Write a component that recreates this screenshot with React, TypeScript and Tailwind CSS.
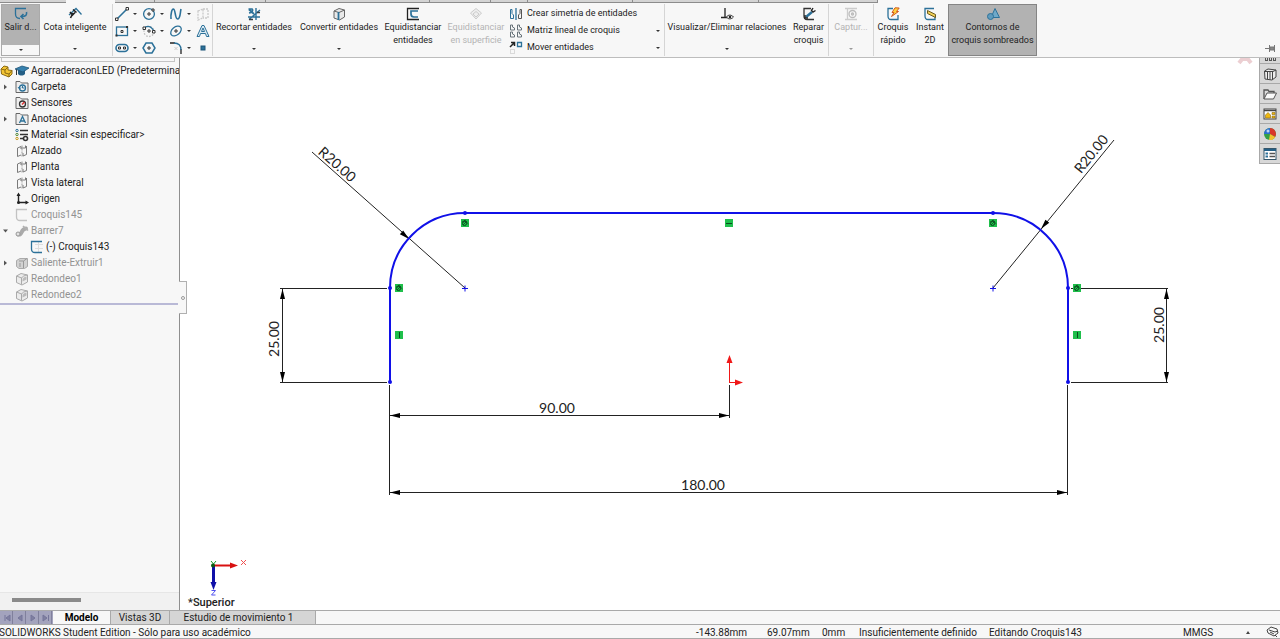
import type { ReactNode } from 'react'

const BLUE = '#2c7199'
const DARK = '#3a3f44'

function Icon({ children, size = 14 }: { children: ReactNode; size?: number }) {
  return (
    <svg width={size} height={size} viewBox="0 0 14 14" fill="none" stroke={BLUE} strokeWidth="1.3" className="shrink-0" aria-hidden="true">
      {children}
    </svg>
  )
}

function Caret({ light }: { light?: boolean }) {
  return (
    <svg width="4" height="2" viewBox="0 0 4 2" className="shrink-0" aria-hidden="true">
      <path d="M0 0H4L2 2Z" fill={light ? '#999' : '#333'} />
    </svg>
  )
}

const icons = {
  exit: (
    <Icon>
      <path d="M12 1.5H1.500V7C1.500 10 3 11.500 6 11.500" />
      <path d="M12.500 5C13 8 12 9.500 7.500 9.500M9.500 7L7 9.500L9.500 12" strokeWidth="1.600" />
    </Icon>
  ),
  dimension: (
    <Icon>
      <path d="M1 8L8 1.500L13.500 7.500" />
      <path d="M2.500 11L5 6M2 5L4.500 8L7 5.500M5 2.500L8.500 5.500" stroke="#222" strokeWidth="1.600" />
    </Icon>
  ),
  line: (
    <Icon>
      <path d="M2 12L12 2" strokeWidth="1.600" />
      <path d="M.5 11H3V13.500H.5ZM11 .5H13.500V3H11Z" fill="#fff" stroke="#333" strokeWidth="1" />
    </Icon>
  ),
  circle: (
    <Icon>
      <circle cx="7" cy="7" r="5.400" />
      <path d="M6 6H8V8H6ZM10 2H12V4H10Z" fill="#fff" stroke="#333" strokeWidth="1" />
    </Icon>
  ),
  spline: (
    <Icon>
      <path d="M2 12C1.500 7 3 1.500 4.500 2C6.500 2.500 6 12 8.500 12C11.500 12 11 6 12 2" strokeWidth="1.600" />
    </Icon>
  ),
  plane: (
    <Icon>
      <path d="M2 4L7 2V11L2 13ZM7 2H12V11H7" stroke="#c9c9c9" strokeDasharray="2 1" />
    </Icon>
  ),
  rect: (
    <Icon>
      <rect x="1.500" y="3" width="11" height="8.500" />
      <path d="M6 6.500H8V8.500H6Z" stroke="#333" strokeWidth="1" />
      <path d="M11 2H13V4H11ZM.5 10.500H2.500V12.500H.5Z" fill="#333" stroke="none" />
    </Icon>
  ),
  arc: (
    <Icon>
      <circle cx="7" cy="7.500" r="5" stroke="#bbb" strokeDasharray="1.500 1.500" />
      <path d="M2 4.500C5 1 10 2 12 8" />
      <path d="M1 3H3.500V5.500H1ZM6 6H8V8H6ZM10.500 6.500H13V9H10.500Z" fill="#fff" stroke="#333" strokeWidth="1" />
    </Icon>
  ),
  ellipse: (
    <Icon>
      <ellipse cx="7" cy="7" rx="6" ry="4" transform="rotate(-40 7 7)" />
      <path d="M6 6H8V8H6Z" stroke="#333" strokeWidth="1" />
    </Icon>
  ),
  text: (
    <Icon>
      <path d="M1 12.500L6 1.500H8L13 12.500H10.500L9.500 9.500H4.500L3.500 12.500ZM5.500 7.500H8.500L7 4Z" fill="#dcebf4" strokeWidth="1" />
    </Icon>
  ),
  slot: (
    <Icon>
      <rect x="1" y="3.500" width="12" height="7" rx="3.500" strokeWidth="1.600" />
      <path d="M3.500 6H5.500V8H3.500ZM8.500 6H10.500V8H8.500Z" stroke="#333" strokeWidth="1" />
    </Icon>
  ),
  polygon: (
    <Icon>
      <path d="M4 2H10L13 7L10 12H4L1 7Z" strokeWidth="1.500" />
      <path d="M6 6H8V8H6Z" stroke="#333" strokeWidth="1" />
    </Icon>
  ),
  fillet: (
    <Icon>
      <path d="M1 2H6M12 8V13" stroke="#222" />
      <path d="M5 2C10 2 12 5 12 9" />
      <path d="M5.500 6L8.500 9M8.500 6L5.500 9" stroke="#ccc" strokeWidth="1" />
    </Icon>
  ),
  point: (
    <Icon>
      <rect x="5" y="5" width="4" height="4" fill="#2c7199" stroke="#1c5578" strokeWidth="1" />
    </Icon>
  ),
  trim: (
    <Icon>
      <path d="M1 10H13M9 1V13M13 3L2 12.500" strokeWidth="1.400" />
      <path d="M1.500 2H5C6.500 3 5 5.500 2 6M2 2.500L7 7" strokeWidth="1.700" />
      <path d="M2 12.500H6M10 5.500H13" stroke={DARK} strokeWidth="1.500" />
    </Icon>
  ),
  convert: (
    <Icon>
      <path d="M2 4L7 1.500L12.500 3V10L7.500 13L2 11Z" fill="#e9e9e9" stroke="#666" strokeWidth="1" />
      <path d="M7 5.500L12.500 3M2 4L7 5.500" stroke="#666" strokeWidth="1" />
      <path d="M6.500 5V13" strokeWidth="1.800" />
    </Icon>
  ),
  offset: (
    <Icon>
      <path d="M13 1.500H1.500V12.500H13" stroke="#222" />
      <path d="M12 4H5V7C5 9 6 10 8 10H12" strokeWidth="1.700" />
    </Icon>
  ),
  offsetSurface: (
    <Icon>
      <path d="M1.500 6L7 1.500L12.500 6L7 12Z M4 7L7 4.500L10 7L7 10Z" stroke="#ccc" fill="#eee" strokeWidth="1" />
    </Icon>
  ),
  mirror: (
    <Icon>
      <path d="M7 1V13" />
      <path d="M1.500 2.500V11.500H4.500V8L3 6.500V2.500Z" strokeWidth="1" />
      <path d="M12.500 2.500V11.500H9.500V8L11 6.500V2.500Z" stroke="#555" strokeWidth="1" />
    </Icon>
  ),
  pattern: (
    <Icon>
      <path d="M1.500 1V6H5.500V4L3.500 3V1ZM8.500 1V6H12.500V4L10.500 3V1ZM1.500 8V13H5.500V11L3.500 10V8ZM8.500 8V13H12.500V11L10.500 10V8Z" stroke="#68737a" strokeWidth="1" />
    </Icon>
  ),
  move: (
    <Icon>
      <path d="M8.500 1.500H12.500V5.500H8.500Z" />
      <path d="M1 6L5 2M2 1.500H5.500V5" stroke="#222" strokeWidth="1.500" />
      <path d="M1.500 8.500H5.500V12.500H1.500Z" stroke="#bbb" strokeWidth="1" strokeDasharray="1 1" />
    </Icon>
  ),
  relations: (
    <Icon>
      <path d="M5 1V10M1 10.500H7" stroke="#222" />
      <path d="M6.500 10C8 7.500 11.500 7.500 13.500 10C11.500 12.500 8 12.500 6.500 10Z" fill="#fff" stroke="#333" strokeWidth="1" />
      <circle cx="10" cy="10" r="1.300" fill="#222" stroke="none" />
    </Icon>
  ),
  repair: (
    <Icon>
      <path d="M9 1.500H2V9C2 11.500 3 12.500 5 12.500H12" stroke="#333" />
      <path d="M4 10L10 5" strokeWidth="2.400" />
      <path d="M13.500 3.500L11 5L9.500 3.500L11 1M3 8V11H6" stroke="#222" strokeWidth="1.400" />
    </Icon>
  ),
  snap: (
    <Icon>
      <path d="M1 1.500H13M1 12.500H13M3.500 1V13" stroke="#ccc" />
      <circle cx="8.500" cy="7" r="3.500" stroke="#bbb" />
      <circle cx="8.500" cy="7" r="1" stroke="#bbb" />
    </Icon>
  ),
  rapid: (
    <Icon>
      <path d="M7 1.500H2V9C2 11.500 3 12.500 5 12.500H12V8" />
      <path d="M9 .8L13.200 1L10.500 4.500H12.500L5.500 9.500L8 5.500H6Z" fill="#ffd23c" stroke="#d2591e" strokeWidth="1" />
    </Icon>
  ),
  instant: (
    <Icon>
      <path d="M11 1.500H2V9C2 11.500 3 12.500 5 12.500H12V10" />
      <path d="M4.500 3.500L12.500 7.500V10.500L4.500 6.500Z" fill="#f0cf57" stroke="#6b5b1c" strokeWidth="1" />
    </Icon>
  ),
  shaded: (
    <Icon>
      <path d="M9 1.500L13.500 10.500H5Z" fill="#6fa9c9" strokeWidth="1" />
      <circle cx="4.500" cy="9.500" r="3" fill="#5f9bbd" strokeWidth="1" />
    </Icon>
  ),
}

type ToolProps = {
  icon: ReactNode
  lines: string[]
  width: string
  caret?: boolean
  disabled?: boolean
}

function Tool({ icon, lines, width, caret, disabled }: ToolProps) {
  return (
    <button
      type="button"
      disabled={disabled}
      className={`flex h-13 shrink-0 flex-col items-center whitespace-nowrap pt-[3px] text-[9px] leading-[13px] ${width} ${disabled ? 'text-[#b4b4b4]' : 'text-[#222]'}`}
    >
      {icon}
      {lines.map(line => <span key={line}>{line}</span>)}
      {caret && <span className="mt-auto pb-1.5"><Caret light={disabled} /></span>}
    </button>
  )
}

const sketchTools: { name: string; icon: ReactNode; menu?: boolean }[] = [
  { name: 'Línea', icon: icons.line, menu: true },
  { name: 'Círculo', icon: icons.circle, menu: true },
  { name: 'Spline', icon: icons.spline, menu: true },
  { name: 'Plano', icon: icons.plane },
  { name: 'Rectángulo', icon: icons.rect, menu: true },
  { name: 'Arco', icon: icons.arc, menu: true },
  { name: 'Elipse', icon: icons.ellipse, menu: true },
  { name: 'Texto', icon: icons.text },
  { name: 'Ranura', icon: icons.slot, menu: true },
  { name: 'Polígono', icon: icons.polygon },
  { name: 'Redondeo', icon: icons.fillet, menu: true },
  { name: 'Punto', icon: icons.point },
]

const tabWidths = ['w-10', 'w-[111px]', 'w-[164px]', 'w-[61px]', 'w-[37px]', 'w-[105px]', 'w-[126px]', 'w-[119px]']

function Toolbar() {
  return (
    <header className="flex h-[58px] shrink-0 flex-col border-b border-[#bdbdbd] bg-[#f7f7f7]">
      <div className="flex h-[3px] shrink-0">
        <div className="w-[66px] border-b border-[#8c8c8c] bg-[#d4d4d4]" />
        <div className="w-[49px]" />
        {tabWidths.map(w => <div key={w} className={`border-r border-b border-[#8c8c8c] bg-[#d4d4d4] ${w}`} />)}
      </div>
      <div className="flex grow items-start pt-px pl-px">
        <button type="button" className="flex h-13 w-[39px] shrink-0 flex-col border border-[#aaa] text-[9px] leading-[13px] text-[#222]">
          <span className="flex h-10 w-full flex-col items-center whitespace-nowrap bg-[#b2b2b2] pt-[2px]">
            {icons.exit}
            Salir d...
          </span>
          <span className="flex w-full grow items-center justify-center"><Caret /></span>
        </button>
        <Tool icon={icons.dimension} lines={['Cota inteligente']} width="w-[70px]" caret />
        <div className="ml-0.5 grid h-13 w-[101px] shrink-0 grid-cols-[27px_27px_27px_14px] content-start border-x border-[#d5d5d5] pt-px pl-[2px]">
          {sketchTools.map(t => (
            <button key={t.name} type="button" aria-label={t.name} className="flex h-[17px] items-center gap-1">
              {t.icon}
              {t.menu && <Caret />}
            </button>
          ))}
        </div>
        <Tool icon={icons.trim} lines={['Recortar entidades']} width="w-[82px]" caret />
        <Tool icon={icons.convert} lines={['Convertir entidades']} width="w-[88px]" caret />
        <Tool icon={icons.offset} lines={['Equidistanciar', 'entidades']} width="w-[60px]" />
        <Tool icon={icons.offsetSurface} lines={['Equidistanciar', 'en superficie']} width="w-[66px]" disabled />
        <div className="flex h-13 w-[156px] shrink-0 flex-col border-r border-[#d5d5d5] pt-px text-[9px] text-[#222]">
          <button type="button" className="flex h-[17px] items-center gap-1">{icons.mirror}Crear simetría de entidades</button>
          <button type="button" className="flex h-[17px] items-center gap-1 pr-1">{icons.pattern}Matriz lineal de croquis<span className="ml-auto"><Caret /></span></button>
          <button type="button" className="flex h-[17px] items-center gap-1 pr-1">{icons.move}Mover entidades<span className="ml-auto"><Caret /></span></button>
        </div>
        <Tool icon={icons.relations} lines={['Visualizar/Eliminar relaciones']} width="w-[124px]" caret />
        <Tool icon={icons.repair} lines={['Reparar', 'croquis']} width="w-[39px]" />
        <div className="flex border-x border-[#d5d5d5]">
          <Tool icon={icons.snap} lines={['Captur...']} width="w-11" caret disabled />
        </div>
        <Tool icon={icons.rapid} lines={['Croquis', 'rápido']} width="w-[38px]" />
        <Tool icon={icons.instant} lines={['Instant', '2D']} width="w-[36px]" />
        <div className="flex bg-[#b2b2b2] outline -outline-offset-1 outline-[#858585]">
          <Tool icon={icons.shaded} lines={['Contornos de', 'croquis sombreados']} width="w-[89px]" />
        </div>
        <button type="button" aria-label="Fijar" className="mt-auto mr-1 mb-1 ml-auto">
          <svg width="11" height="9" viewBox="0 0 11 9" fill="none" stroke="#777"><path d="M0 4.500H4M4.500 1V8M9.500 1V8" /><path d="M5 3H9V6H5Z" fill="#888" /></svg>
        </button>
      </div>
    </header>
  )
}

const treeIcons = {
  history: (
    <Icon>
      <path d="M1 12.500V1.500H5L6.500 3H13V12.500Z" fill="#eee" stroke="#666" strokeWidth="1" />
      <circle cx="7.500" cy="8" r="3" />
      <path d="M7.500 6V8H9.500M3 7L4.500 9L6 7.500" strokeWidth="1" />
    </Icon>
  ),
  sensors: (
    <Icon>
      <path d="M1 12.500V1.500H5L6.500 3H13V12.500Z" fill="#eee" stroke="#666" strokeWidth="1" />
      <circle cx="7.500" cy="8" r="3" stroke="#333" />
      <path d="M7 8.500L9.500 6" stroke="#d33" strokeWidth="1.500" />
    </Icon>
  ),
  notes: (
    <Icon>
      <path d="M1 12.500V1.500H5L6.500 3H13V12.500Z" fill="#eee" stroke="#666" strokeWidth="1" />
      <path d="M4.500 11L7.500 4.500L10.500 11M5.500 9H9.500" />
    </Icon>
  ),
  material: (
    <Icon>
      <path d="M5 2.500H13M5 6.500H13M5 10.500H8" stroke="#333" strokeWidth="1.500" />
      <circle cx="2" cy="2.500" r="1.200" strokeWidth="1" />
      <circle cx="2" cy="6.500" r="1.200" stroke="#568a3b" strokeWidth="1" />
      <circle cx="2" cy="10.500" r="1.200" stroke="#c79b22" strokeWidth="1" />
      <circle cx="10.500" cy="10.500" r="2" stroke="#333" strokeWidth="1.600" />
    </Icon>
  ),
  plane: (
    <Icon>
      <path d="M6 2.500L2.500 4V12.500L6 11M6 2.500V5M8 9V12M6 4H10.500V1.500M8 12L11.500 10.500V2" stroke="#7a7a7a" strokeWidth="1" />
      <path d="M7 1.500V13" stroke="#999" strokeWidth="1" strokeDasharray="2 1" />
    </Icon>
  ),
  origin: (
    <Icon>
      <path d="M3.500 2V10.500H12" stroke="#222" strokeWidth="1.400" />
      <path d="M1.500 4L3.500 .5L5.500 4ZM10.500 8.500L14 10.500L10.500 12.500Z" fill="#222" stroke="none" />
      <circle cx="3.500" cy="10.500" r="1.500" fill="#222" stroke="none" />
    </Icon>
  ),
  sketchOff: (
    <Icon>
      <path d="M12 1.500H1.500V9C1.500 11.500 3 12.500 5 12.500H12" stroke="#c2c2c2" />
    </Icon>
  ),
  sketch: (
    <Icon>
      <path d="M5 4.500H13M5 8.500H13M8.500 2V12" stroke="#ddd" strokeWidth="1" />
      <path d="M12 1.500H1.500V9C1.500 11.500 3 12.500 5 12.500H12" />
    </Icon>
  ),
  sweep: (
    <Icon>
      <path d="M3 10.500C8 11.500 5 5 11 4.500" stroke="#aaa" strokeWidth="4" strokeLinecap="round" />
      <circle cx="3" cy="10" r="2" fill="#e2e2e2" stroke="#999" strokeWidth="1" />
      <path d="M8 2L13 6.500" stroke="#b0b0b0" strokeWidth="1.600" />
    </Icon>
  ),
  extrude: (
    <Icon>
      <path d="M1.500 4.500L5 2.500H12.500V10.500L9.500 12.500H4L1.500 10.500Z" fill="#d2d2d2" stroke="#aaa" strokeWidth="1" />
      <path d="M4 5H8.500V12M8.500 5L12 2.500M5 7V11" stroke="#999" strokeWidth="1" />
    </Icon>
  ),
  round: (
    <Icon>
      <path d="M1.500 4L6 1.500L12.500 3V10L7 13L1.500 10.500Z" fill="#ececec" stroke="#aaa" strokeWidth="1" />
      <path d="M1.500 4L6.500 6C7.500 4.500 9 3.500 12.500 3M6.500 6V12.500" stroke="#aaa" strokeWidth="1" />
      <path d="M7.500 8C7.500 6 9 5 11.500 4.500V7.500L7.500 9.500Z" fill="#bbb" stroke="none" />
    </Icon>
  ),
}

type Node = { label: string; icon: ReactNode; arrow?: 'open' | 'closed'; dim?: boolean; indent?: boolean }

const nodes: Node[] = [
  { label: 'Carpeta', icon: treeIcons.history, arrow: 'closed' },
  { label: 'Sensores', icon: treeIcons.sensors },
  { label: 'Anotaciones', icon: treeIcons.notes, arrow: 'closed' },
  { label: 'Material <sin especificar>', icon: treeIcons.material },
  { label: 'Alzado', icon: treeIcons.plane },
  { label: 'Planta', icon: treeIcons.plane },
  { label: 'Vista lateral', icon: treeIcons.plane },
  { label: 'Origen', icon: treeIcons.origin },
  { label: 'Croquis145', icon: treeIcons.sketchOff, dim: true },
  { label: 'Barrer7', icon: treeIcons.sweep, arrow: 'open', dim: true },
  { label: '(-) Croquis143', icon: treeIcons.sketch, indent: true },
  { label: 'Saliente-Extruir1', icon: treeIcons.extrude, arrow: 'closed', dim: true },
  { label: 'Redondeo1', icon: treeIcons.round, dim: true },
  { label: 'Redondeo2', icon: treeIcons.round, dim: true },
]

function FeatureTree() {
  return (
    <aside className="flex w-45 shrink-0 flex-col overflow-hidden border-r border-[#8f8f8f] bg-[#f7f7f7]">
      <div className="mx-px mr-1 h-1 shrink-0 border-x border-b border-[#c4c4c4]" />
      <ul className="mr-px whitespace-nowrap pt-px text-[10px] leading-4 text-[#222]">
        <li className="flex h-4 items-center">
          <svg width="14" height="14" viewBox="0 0 14 14" className="shrink-0" aria-hidden="true">
            <path d="M1 5L4 2L8 3V6L12 6.500V10L9 13L1.500 10Z" fill="#f3c433" stroke="#8b6b12" />
            <path d="M1 5L5 6V9L9 10V13M5 6L8 3M9 10L12 6.500" fill="none" stroke="#8b6b12" />
          </svg>
          <svg width="14" height="14" viewBox="0 0 14 14" className="mr-[2px] ml-px shrink-0" aria-hidden="true">
            <path d="M3 6V10C5 12 8 12 10 10V6Z" fill="#245f86" />
            <path d="M0 5L7 2L14 4L8 8Z" fill="#3680ae" stroke="#1f5578" strokeWidth=".8" />
            <path d="M1.500 5.500V11" stroke="#333" />
          </svg>
          AgarraderaconLED (Predetermina
        </li>
        {nodes.map(n => (
          <li key={n.label} className={`flex h-4 items-center gap-[2px] ${n.indent ? 'pl-[15px]' : ''} ${n.dim ? 'text-[#929292]' : ''}`}>
            <span className="flex w-[13px] shrink-0 justify-start pl-[3px]">
              {n.arrow && (
                <svg width="5" height="6" viewBox="0 0 5 6" aria-hidden="true">
                  <path d={n.arrow === 'open' ? 'M0 1.500H5L2.500 4.500Z' : 'M1 .5L4 3L1 5.500Z'} fill="#555" />
                </svg>
              )}
            </span>
            {n.icon}
            {n.label}
          </li>
        ))}
      </ul>
      <div className="mr-px h-[2px] shrink-0 bg-[#b9b9d6]" />
      <div className="mt-auto flex h-[18px] items-center border-t border-[#e6e6e6] bg-[#f1f1f1] pb-1">
        <div className="ml-3 h-1 w-[69px] bg-[#8a8a8a]" />
      </div>
    </aside>
  )
}

// filled arrow head with its tip on (x, y); angle 0 points right
function Arrow({ x, y, angle }: { x: number; y: number; angle: number }) {
  return <path d="M0 0L-10 -2.500V2.500Z" transform={`translate(${x} ${y}) rotate(${angle})`} fill="#000" stroke="none" />
}

function Relation({ x, y, kind }: { x: number; y: number; kind: 'tangent' | 'horizontal' | 'vertical' }) {
  return (
    <g transform={`translate(${x} ${y})`} stroke="#0b4a1e">
      <rect x="-4" y="-4" width="8" height="8" fill="#1fbf4b" stroke="none" />
      {kind === 'horizontal' && <path d="M-3 .5H3" />}
      {kind === 'vertical' && <path d="M.5 -3V3" />}
      {kind === 'tangent' && (
        <>
          <circle cx="-.5" cy=".5" r="2" fill="none" />
          <path d="M-3 -1L1 -3M-1 -3L3.500 1M-2 2L2 -2" strokeWidth=".8" />
        </>
      )}
    </g>
  )
}

function Sketch() {
  return (
    <svg viewBox="180 58 1100 552" className="h-full w-full" role="img" aria-label="Croquis143">
      <g stroke="#222" strokeWidth="1" fill="none">
        <path d="M312 152L465 288M1114 140L993 288" />
        <path d="M280 288.500H387M280 382.500H387M282.500 289V382" />
        <path d="M1071 288.500H1168M1071 382.500H1168M1166.500 289V382" />
        <path d="M389.500 385V495M1067.500 385V495M729.500 385V418" />
        <path d="M390 415.500H729M390 492.500H1067" />
      </g>
      <Arrow x={409} y={239} angle={41.600} />
      <Arrow x={1041} y={229} angle={129.300} />
      <Arrow x={282.500} y={289} angle={-90} />
      <Arrow x={282.500} y={382} angle={90} />
      <Arrow x={1166.500} y={289} angle={-90} />
      <Arrow x={1166.500} y={382} angle={90} />
      <Arrow x={390} y={415.500} angle={180} />
      <Arrow x={729} y={415.500} angle={0} />
      <Arrow x={390} y={492.500} angle={180} />
      <Arrow x={1067} y={492.500} angle={0} />

      <path d="M390 382V288A75 75 0 0 1 465 213H993A75 75 0 0 1 1068 288V382" fill="none" stroke="#1010e8" strokeWidth="2" />
      <g fill="#1010e8">
        <circle cx="390" cy="382" r="2" />
        <circle cx="390" cy="288" r="2" />
        <circle cx="465" cy="213" r="2" />
        <circle cx="993" cy="213" r="2" />
        <circle cx="1068" cy="288" r="2" />
        <circle cx="1068" cy="382" r="2" />
      </g>
      <path d="M462 288.500H468M465 285.500V291.500M990 288.500H996M993 285.500V291.500" stroke="#1010e8" />

      <g className="font-[Lato,sans-serif] text-[14px]" fill="#222" textAnchor="middle">
        <text transform="translate(334 168) rotate(41.6)">R20.00</text>
        <text transform="translate(1095 157) rotate(-50.7)">R20.00</text>
        <text transform="translate(279 339) rotate(-90)">25.00</text>
        <text transform="translate(1164 325) rotate(-90)">25.00</text>
        <text x="557" y="413">90.00</text>
        <text x="703" y="490">180.00</text>
      </g>

      <path d="M729.500 382V362M729 382.500H737" stroke="#f01818" />
      <path d="M726.500 363L729.500 355L732.500 363ZM735 379.500L743 382.500L735 385.500Z" fill="#f01818" />

      <Relation x={465} y={223} kind="tangent" />
      <Relation x={729} y={223} kind="horizontal" />
      <Relation x={993} y={223} kind="tangent" />
      <Relation x={399} y={288} kind="tangent" />
      <Relation x={399} y={335} kind="vertical" />
      <Relation x={1077} y={288} kind="tangent" />
      <Relation x={1077} y={335} kind="vertical" />
    </svg>
  )
}

const panes: { name: string; icon: ReactNode }[] = [
  {
    name: 'Biblioteca de diseño',
    icon: <Icon><path d="M1.500 4L5 2L13 3V10L9 13L2 12ZM4.500 4.500V12.500M7 4.500V12.500M9.500 4.500V12.500M2 4.500H10L13 3" stroke="#444" strokeWidth="1" fill="#eee" /></Icon>,
  },
  {
    name: 'Explorador de archivos',
    icon: <Icon><path d="M1 12V3H5L6 4.500H11V6" stroke="#555" fill="#ddd" /><path d="M1 12L4 6H13.500L10.500 12Z" fill="#fafafa" stroke="#555" strokeWidth="1" /></Icon>,
  },
  {
    name: 'Paleta de visualización',
    icon: <Icon><rect x="1" y="2" width="12" height="10" fill="#fff" stroke="#444" strokeWidth="1" /><path d="M1 3.500H13" stroke="#444" strokeWidth="1.500" /><path d="M2.500 11V8L5 5.500L7.500 8V11ZM9 5.500H12V7.500H9ZM9 9H12V11H9Z" fill="#efb810" stroke="#8a6a10" strokeWidth=".6" /></Icon>,
  },
  {
    name: 'Apariencias',
    icon: (
      <Icon>
        <g stroke="none">
          <circle cx="7" cy="7" r="6" fill="#35a046" />
          <path d="M7 7V1A6 6 0 0 1 12.200 10Z" fill="#d9372c" />
          <path d="M7 7V1A6 6 0 0 0 1 7Z" fill="#2c6fd0" />
          <path d="M7 7L12.200 10A6 6 0 0 1 6 13Z" fill="#f2c230" />
          <circle cx="5" cy="4" r="1.500" fill="#fff" opacity=".7" />
        </g>
      </Icon>
    ),
  },
  {
    name: 'Propiedades',
    icon: <Icon><rect x="1" y="1.500" width="12" height="11" fill="#fff" stroke="#34566b" strokeWidth="1" /><path d="M1 3H13" stroke="#245f86" strokeWidth="2" /><path d="M2.500 6.500H5M2.500 9.500H5" strokeWidth="2" /><path d="M6.500 6.500H12M6.500 9.500H12" stroke="#555" /></Icon>,
  },
]

function Viewport() {
  return (
    <main className="relative min-w-0 grow bg-white">
      <Sketch />
      <button type="button" aria-label="Contraer panel" className="absolute top-[223px] -left-px flex h-[33px] w-2 items-center justify-center border border-l-0 border-[#b0b0b0] bg-[#f7f7f7]">
        <span className="size-1 rounded-full border border-[#999]" />
      </button>
      <svg width="16" height="7" viewBox="0 0 16 7" className="absolute top-0 right-[27px]" aria-hidden="true">
        <path d="M2 5L6 0M14 5L10 0M5 1H11" stroke="#eccfd2" strokeWidth="4" />
      </svg>
      <div className="absolute top-0 right-0 flex w-[21px] flex-col border-b border-l border-[#a8a8a8] bg-[#d8d8d8]">
        <div className="flex h-[5px] items-start justify-center gap-px">
          {['a', 'b', 'c'].map(k => <span key={k} className="h-[3px] w-[3px] border border-t-0 border-[#555]" />)}
        </div>
        {panes.map(p => (
          <button key={p.name} type="button" aria-label={p.name} className="flex h-5 items-center justify-center border-t border-[#a8a8a8]">
            {p.icon}
          </button>
        ))}
      </div>
      <div className="absolute bottom-0 left-2 text-[11px] leading-[14px] font-medium text-[#222]">
        <svg width="60" height="38" viewBox="0 0 60 38" aria-hidden="true">
          <path d="M25 7.500H44" stroke="#d81010" strokeWidth="2" />
          <path d="M42 4.500L50 7.500L42 10.500Z" fill="#d81010" />
          <path d="M25.500 8V26" stroke="#1010a8" strokeWidth="3" />
          <path d="M22.500 24H28.500L25.500 32Z" fill="#1010a8" />
          <path d="M23 3L25.500 6L28 3M25.500 6V9" stroke="#119a22" fill="none" />
          <circle cx="25" cy="7.500" r="2" fill="#0b5a14" />
          <path d="M53 2L58 7M58 2L53 7" stroke="#f05050" />
          <path d="M23.500 32.500H27.500L23.500 37H27.500" stroke="#5050f0" fill="none" />
        </svg>
        *Superior
      </div>
    </main>
  )
}

const navPaths = ['M4 2V8M9 2L5 5L9 8Z', 'M8 2L4 5L8 8Z', 'M4 2L8 5L4 8Z', 'M3 2L7 5L3 8ZM8.500 2V8']
const navNames = ['Primera', 'Anterior', 'Siguiente', 'Última']

function Footer() {
  return (
    <footer className="shrink-0 whitespace-nowrap bg-[#f7f7f7] text-[10px] text-[#222]">
      <div className="flex h-[15px] border-y border-[#a9a9a9] leading-[14px]">
        <div className="flex w-[53px] bg-[#a3a3bd]">
          {navPaths.map((d, i) => (
            <button key={d} type="button" aria-label={navNames[i]} className="flex w-[13px] items-center justify-center border-r border-[#80809c]">
              <svg width="11" height="10" viewBox="0 0 11 10"><path d={d} fill="#8080a0" stroke="#75759a" /></svg>
            </button>
          ))}
        </div>
        <button type="button" className="w-[58px] border-r border-[#a9a9a9] font-bold text-black">Modelo</button>
        <button type="button" className="w-[59px] border-r border-[#a9a9a9] bg-[#d5d5d5]">Vistas 3D</button>
        <button type="button" className="w-[146px] border-r border-[#a9a9a9] bg-[#d5d5d5] pr-2">Estudio de movimiento 1</button>
      </div>
      <div className="flex h-[14px] items-center border-b border-[#a9a9a9] pt-px leading-[13px]">
        <span className="-ml-px">SOLIDWORKS Student Edition - Sólo para uso académico</span>
        <span className="ml-auto w-[71px]">-143.88mm</span>
        <span className="w-[55px]">69.07mm</span>
        <span className="w-[37px]">0mm</span>
        <span className="w-[130px]">Insuficientemente definido</span>
        <span className="w-[194px]">Editando Croquis143</span>
        <span className="w-[63px]">MMGS</span>
        <svg width="4" height="3" viewBox="0 0 4 3" aria-hidden="true"><path d="M0 3H4L2 0Z" fill="#444" /></svg>
        <svg width="13" height="12" viewBox="0 0 13 12" className="mr-px ml-4" fill="none" stroke="#444" aria-hidden="true">
          <path d="M1 4L5 1L11 3L12 7L8 10L2 7Z M3 4L9 6M4 6L8 8M9 6L12 5M9 9L11 11" />
        </svg>
      </div>
    </footer>
  )
}

export default function App() {
  return (
    <div className="flex h-screen flex-col overflow-hidden bg-white font-[Roboto,'Noto_Sans',sans-serif]">
      <Toolbar />
      <div className="flex min-h-0 grow">
        <FeatureTree />
        <Viewport />
      </div>
      <Footer />
    </div>
  )
}
